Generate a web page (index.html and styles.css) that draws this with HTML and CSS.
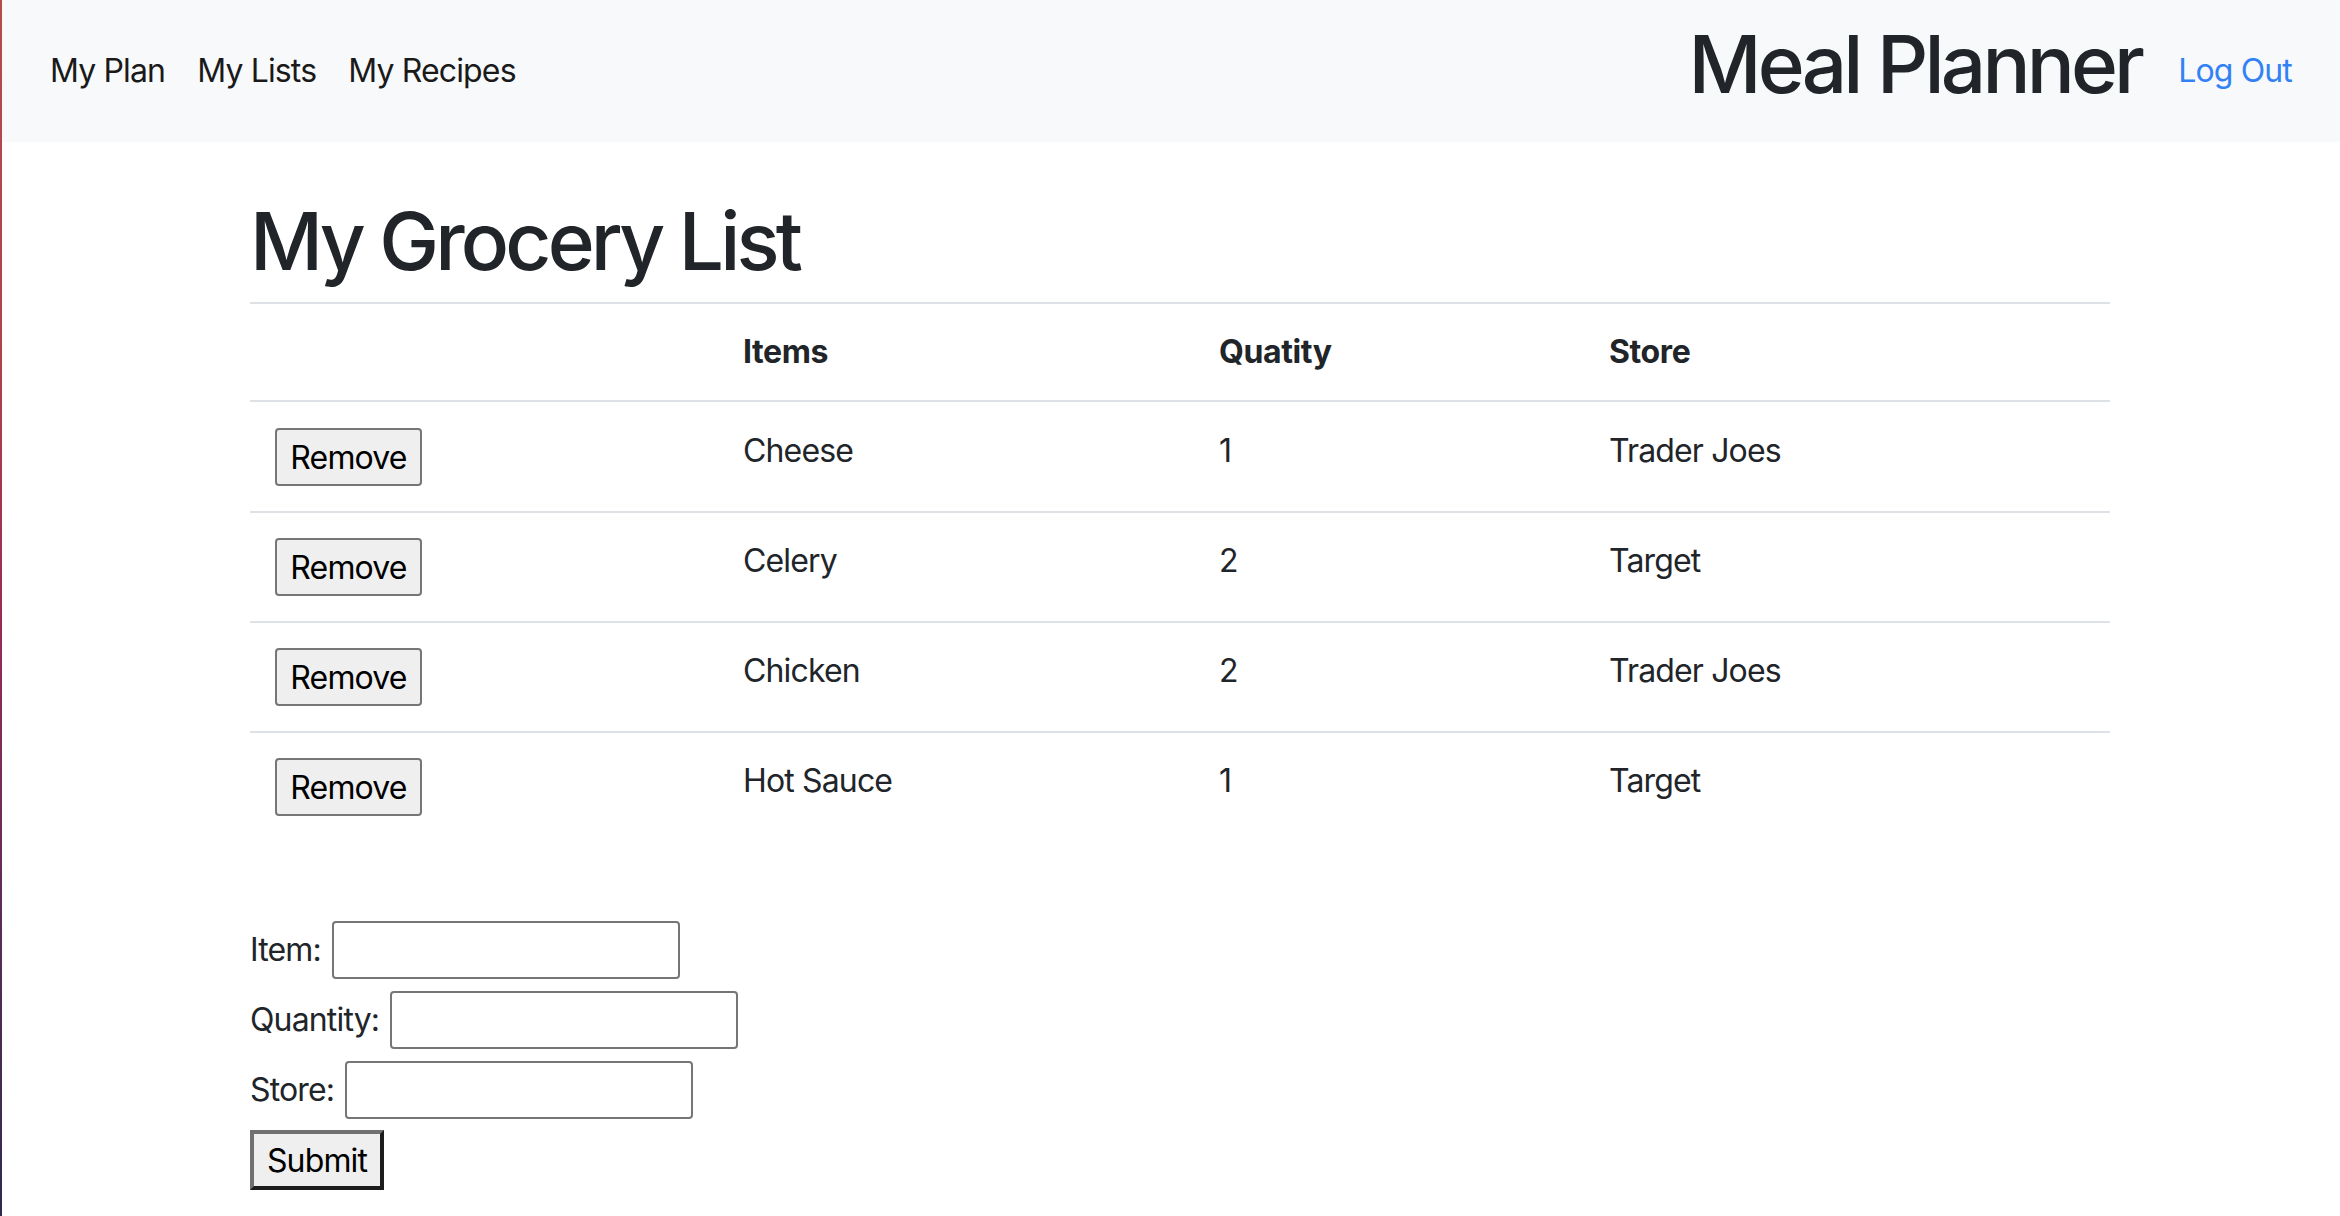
FILE: index.html
```html
<!DOCTYPE html>
<html lang="en">
<head>
<meta charset="utf-8">
<title>Meal Planner</title>
<link rel="stylesheet" href="styles.css">
</head>
<body>
<div class="window-edge"></div>
<nav class="navbar">
  <ul class="nav-links">
    <li><a class="nav-link" href="#">My Plan</a></li>
    <li><a class="nav-link" href="#">My Lists</a></li>
    <li><a class="nav-link" href="#">My Recipes</a></li>
  </ul>
  <div class="nav-right">
    <span class="brand">Meal Planner</span>
    <a class="logout" href="#">Log Out</a>
  </div>
</nav>
<main class="container">
  <h1 class="page-title">My Grocery List</h1>
  <table class="grocery">
    <colgroup>
      <col class="c-action"><col class="c-item"><col class="c-qty"><col class="c-store">
    </colgroup>
    <thead>
      <tr><th></th><th>Items</th><th>Quatity</th><th>Store</th></tr>
    </thead>
    <tbody>
      <tr><td><button class="btn-remove">Remove</button></td><td>Cheese</td><td>1</td><td>Trader Joes</td></tr>
      <tr><td><button class="btn-remove">Remove</button></td><td>Celery</td><td>2</td><td>Target</td></tr>
      <tr><td><button class="btn-remove">Remove</button></td><td>Chicken</td><td>2</td><td>Trader Joes</td></tr>
      <tr><td><button class="btn-remove">Remove</button></td><td>Hot Sauce</td><td>1</td><td>Target</td></tr>
    </tbody>
  </table>
  <form class="add-form">
    <div class="form-row"><label for="item">Item:</label><input id="item" type="text"></div>
    <div class="form-row"><label for="qty">Quantity:</label><input id="qty" type="text"></div>
    <div class="form-row"><label for="store">Store:</label><input id="store" type="text"></div>
    <div class="form-row"><button type="submit" class="btn-submit">Submit</button></div>
  </form>
</main>
</body>
</html>
```
FILE: styles.css
```css
* { box-sizing: border-box; }

html, body {
  margin: 0;
  padding: 0;
  background: #ffffff;
}

body {
  font-family: Inter, "Noto Sans", sans-serif;
  font-size: 32px;
  line-height: 48px;
  letter-spacing: -0.85px;
  color: #212529;
}

.window-edge {
  position: fixed;
  left: 0;
  top: 0;
  bottom: 0;
  width: 2px;
  background: linear-gradient(#b84a4a 0%, #b0404c 30%, #9a2c56 50%, #5e2b58 75%, #2e2a52 100%);
  z-index: 10;
}

/* Navbar */
.navbar {
  display: flex;
  align-items: center;
  justify-content: space-between;
  height: 142px;
  padding: 0 32px 0 34px;
  background: #f8f9fa;
}

.nav-links {
  display: flex;
  list-style: none;
  margin: 0;
  padding: 0;
}

.nav-link {
  display: block;
  padding: 0 16px;
  color: #1a1a1a;
  text-decoration: none;
}

.nav-right {
  display: flex;
  align-items: center;
}

.brand {
  font-size: 80px;
  line-height: 96px;
  font-weight: 500;
  letter-spacing: -3.85px;
  color: #212529;
  margin-right: 21px;
  margin-bottom: 14px;
}

.logout {
  padding: 0 16px;
  color: #3282f6;
  text-decoration: none;
}

/* Main */
.container {
  width: 1860px;
  margin-left: 250px;
}

.page-title {
  font-size: 80px;
  line-height: 96px;
  font-weight: 500;
  letter-spacing: -3.85px;
  margin: 51px 0 13px;
}

.grocery {
  width: 1860px;
  table-layout: fixed;
  border-collapse: collapse;
}

.c-action { width: 469px; }
.c-item { width: 476px; }
.c-qty { width: 390px; }
.c-store { width: 525px; }

.grocery th,
.grocery td {
  padding: 24px;
  text-align: left;
  vertical-align: top;
  border-top: 2px solid #dee2e6;
}

.grocery tbody tr:first-child td {
  padding-top: 25px;
}

.grocery th {
  font-weight: 700;
  letter-spacing: -0.4px;
}

.btn-remove {
  display: block;
  width: 147px;
  height: 58px;
  margin: 1px 0 1px 1px;
  padding: 0;
  font-family: inherit;
  font-size: 32px;
  letter-spacing: -0.85px;
  color: #000;
  background: #efefef;
  border: 2px solid #767676;
  border-radius: 4px;
}

/* Form */
.add-form {
  margin-top: 80px;
  display: flex;
  flex-direction: column;
  gap: 12px;
  padding-bottom: 26px;
}

.form-row {
  display: flex;
  align-items: center;
  gap: 11px;
  height: 58px;
}

.form-row input {
  width: 348px;
  height: 58px;
  border: 2px solid #767676;
  border-radius: 4px;
  background: #fff;
  font-family: inherit;
  font-size: 32px;
}

.btn-submit {
  height: 60px;
  width: 134px;
  padding: 0;
  font-family: inherit;
  font-size: 32px;
  letter-spacing: -0.85px;
  color: #000;
  background: #efefef;
  border-width: 4px;
  border-style: solid;
  border-color: #717171 #1d1d1d #1d1d1d #717171;
}
```
